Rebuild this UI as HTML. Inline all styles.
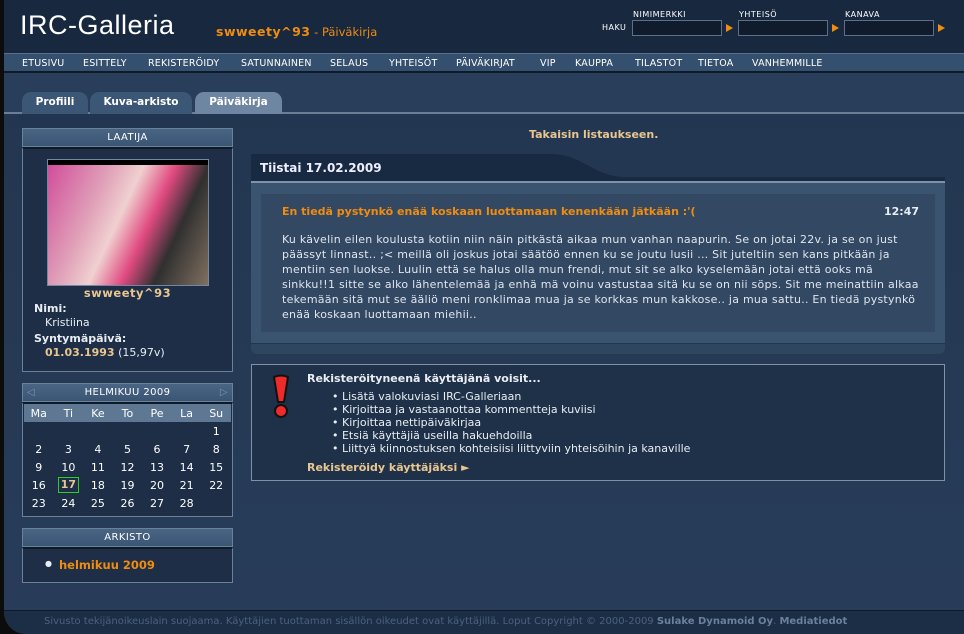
<!DOCTYPE html>
<html><head><meta charset="utf-8">
<style>
*{margin:0;padding:0;box-sizing:border-box}
body{width:964px;height:634px;overflow:hidden;background:#0c0c0c;font-family:"DejaVu Sans","Liberation Sans",sans-serif;font-size:11px;color:#e8edf2;position:relative}
.abs{position:absolute}
#page{position:absolute;left:4px;top:0;width:960px;height:634px;background:linear-gradient(#22354f,#283d5a);overflow:hidden;border-bottom-left-radius:22px}
#hdr{position:absolute;left:0;top:0;width:960px;height:53px;background:#17283f}
.logo{left:16px;top:10px;font-family:"Liberation Sans",sans-serif;font-size:27px;color:#fff;letter-spacing:0.5px}
.sub{left:212px;top:24px;color:#f08c10;font-size:11.5px}
.lbl{font-size:8px;color:#fff;letter-spacing:.5px}
.inp{width:90px;height:16px;background:#101b2b;border:1px solid #5d7089}
.arr{width:0;height:0;border-left:7px solid #f08c10;border-top:4px solid transparent;border-bottom:4px solid transparent}
#nav{position:absolute;left:0;top:53px;width:960px;height:20px;background:#34506e;border-top:1px solid #56708c;border-bottom:2px solid #0f1a28}
#nav span{position:absolute;top:4px;font-size:9.5px;color:#fff;letter-spacing:.2px}
#tabs{position:absolute;left:0;top:73px;width:960px;height:41px;background:#283e5a;border-bottom:2px solid #6a7f96}
.tab{position:absolute;top:19px;height:22px;border-radius:9px 9px 0 0;background:#3c5675;color:#fff;font-weight:bold;font-size:10.5px;text-align:center;line-height:21px}
.box{position:absolute;left:18px;width:211px}
.bh{height:19px;background:linear-gradient(#4a6584,#3b5574);border:1px solid #6a819a;color:#fff;font-size:10px;text-align:center;line-height:17px;letter-spacing:.4px}
.bb{background:#1d2e46;border:1px solid #6a819a;border-top:2px solid #0f1a28}
.cal td{width:29px;text-align:center;height:18px;font-size:11px;color:#fff}
.orange{color:#f08c10}
.tan{color:#e8c690}
</style></head><body>
<div id="page">
<div id="hdr">
 <div class="abs logo">IRC-Galleria</div>
 <div class="abs sub"><b style="font-size:12.5px;letter-spacing:.5px">swweety^93</b> - Päiväkirja</div>
 <div class="abs lbl" style="left:598px;top:23px">HAKU</div>
 <div class="abs lbl" style="left:629px;top:10px">NIMIMERKKI</div>
 <div class="abs lbl" style="left:735px;top:10px">YHTEISÖ</div>
 <div class="abs lbl" style="left:841px;top:10px">KANAVA</div>
 <div class="abs inp" style="left:628px;top:20px"></div><div class="abs arr" style="left:722px;top:24px"></div>
 <div class="abs inp" style="left:734px;top:20px"></div><div class="abs arr" style="left:828px;top:24px"></div>
 <div class="abs inp" style="left:840px;top:20px"></div><div class="abs arr" style="left:934px;top:24px"></div>
</div>
<div id="nav">
<span style="left:18px">ETUSIVU</span><span style="left:79px">ESITTELY</span><span style="left:144px">REKISTERÖIDY</span><span style="left:237px">SATUNNAINEN</span><span style="left:326px">SELAUS</span><span style="left:385px">YHTEISÖT</span><span style="left:452px">PÄIVÄKIRJAT</span><span style="left:536px">VIP</span><span style="left:571px">KAUPPA</span><span style="left:631px">TILASTOT</span><span style="left:694px">TIETOA</span><span style="left:748px">VANHEMMILLE</span>
</div>
<div id="tabs">
 <div class="tab" style="left:18px;width:66px">Profiili</div>
 <div class="tab" style="left:86px;width:102px">Kuva-arkisto</div>
 <div class="tab" style="left:191px;width:87px;background:#6f86a3">Päiväkirja</div>
</div>

<div class="box" style="top:128px">
 <div class="bh">LAATIJA</div>
 <div class="bb" style="height:225px;position:relative">
  <div class="abs" style="left:24px;top:10px;width:162px;height:127px;border:1px solid #7088a4;background:linear-gradient(115deg,#d04a9a 0%,#e0a0b8 30%,#f0d0d0 45%,#e04a80 60%,#303030 75%,#807060 100%)"><div style="height:5px;background:#000"></div></div>
  <div class="abs tan" style="left:0;width:209px;text-align:center;top:137px;font-weight:bold;font-size:11.5px;letter-spacing:.5px">swweety^93</div>
  <div class="abs" style="left:11px;top:153px;font-weight:bold">Nimi:</div>
  <div class="abs" style="left:22px;top:167px">Kristiina</div>
  <div class="abs" style="left:11px;top:183px;font-weight:bold">Syntymäpäivä:</div>
  <div class="abs" style="left:22px;top:197px"><b class="tan">01.03.1993</b> (15,97v)</div>
 </div>
</div>

<div class="box" style="top:383px">
 <div class="bh" style="position:relative"><span class="abs" style="left:4px;top:0;color:#7e93aa">◁</span>HELMIKUU 2009<span class="abs" style="right:4px;top:0;color:#7e93aa">▷</span></div>
 <div class="bb" style="height:115px;padding:0 1px">
  <table class="cal" style="border-collapse:collapse;width:207px">
   <tr style="background:#5e7894"><td>Ma</td><td>Ti</td><td>Ke</td><td>To</td><td>Pe</td><td>La</td><td>Su</td></tr>
   <tr><td></td><td></td><td></td><td></td><td></td><td></td><td>1</td></tr>
   <tr><td>2</td><td>3</td><td>4</td><td>5</td><td>6</td><td>7</td><td>8</td></tr>
   <tr><td>9</td><td>10</td><td>11</td><td>12</td><td>13</td><td>14</td><td>15</td></tr>
   <tr><td>16</td><td><span class="tan" style="display:inline-block;border:1px solid #2cd020;width:21px;height:16px;line-height:14px;font-weight:bold">17</span></td><td>18</td><td>19</td><td>20</td><td>21</td><td>22</td></tr>
   <tr><td>23</td><td>24</td><td>25</td><td>26</td><td>27</td><td>28</td><td></td></tr>
  </table>
 </div>
</div>

<div class="box" style="top:528px">
 <div class="bh">ARKISTO</div>
 <div class="bb" style="height:36px;position:relative">
  <div class="abs" style="left:22px;top:10px;font-size:8px">●</div>
  <div class="abs orange" style="left:36px;top:9px;font-weight:bold;font-size:11.5px">helmikuu 2009</div>
 </div>
</div>

<div class="abs tan" style="left:525px;top:128px;font-weight:bold;font-size:11px">Takaisin listaukseen.</div>
<div class="abs" style="left:247px;top:154px;width:694px;height:200px">
 <svg class="abs" style="left:0;top:0" width="694" height="29">
  <path d="M0 0 H300 C330 0 340 20 370 23 H694 V27 H0 Z" fill="#182a42"/>
  <rect x="0" y="27" width="694" height="2" fill="#7f92a8"/>
 </svg>
 <div class="abs" style="left:9px;top:7px;font-weight:bold;font-size:12px;color:#eef">Tiistai 17.02.2009</div>
 <div class="abs" style="left:0;top:29px;width:694px;height:170px;background:#3a536f;border-radius:0 0 6px 6px"></div>
 <div class="abs" style="left:10px;top:40px;width:674px;height:138px;background:#334862"></div>
 <div class="abs" style="left:0;top:189px;width:694px;height:11px;background:#2f4661;border-top:1px solid #22364f;border-radius:0 0 6px 6px"></div>
 <div class="abs orange" style="left:31px;top:51px;font-weight:bold;font-size:11px">En tiedä pystynkö enää koskaan luottamaan kenenkään jätkään :'(</div>
 <div class="abs" style="left:633px;top:51px;font-weight:bold;font-size:11px">12:47</div>
 <div class="abs" style="left:31px;top:78px;width:640px;line-height:15px;font-size:11px;color:#dfe6ee;letter-spacing:.25px">Ku kävelin eilen koulusta kotiin niin näin pitkästä aikaa mun vanhan naapurin. Se on jotai 22v. ja se on just päässyt linnast.. ;&lt; meillä oli joskus jotai säätöö ennen ku se joutu lusii ... Sit juteltiin sen kans pitkään ja mentiin sen luokse. Luulin että se halus olla mun frendi, mut sit se alko kyselemään jotai että ooks mä sinkku!!1 sitte se alko lähentelemää ja enhä mä voinu vastustaa sitä ku se on nii söps. Sit me meinattiin alkaa tekemään sitä mut se ääliö meni ronklimaa mua ja se korkkas mun kakkose.. ja mua sattu.. En tiedä pystynkö enää koskaan luottamaan miehii..</div>
</div>

<div class="abs" style="left:247px;top:364px;width:694px;height:117px;background:#1f3149;border:1px solid #7f92a8">
 <svg class="abs" style="left:19px;top:9px" width="20" height="46">
  <path d="M3 3 Q10 0 17 3 L13 28 H7 Z" fill="#ee2a2a" stroke="#111" stroke-width="2" stroke-linejoin="round"/>
  <ellipse cx="10" cy="37" rx="6" ry="6" fill="#ee2a2a" stroke="#111" stroke-width="2"/>
 </svg>
 <div class="abs" style="left:55px;top:7px;font-weight:bold">Rekisteröityneenä käyttäjänä voisit...</div>
 <div class="abs" style="left:80px;top:25px;line-height:13px">
  • Lisätä valokuviasi IRC-Galleriaan<br>• Kirjoittaa ja vastaanottaa kommentteja kuviisi<br>• Kirjoittaa nettipäiväkirjaa<br>• Etsiä käyttäjiä useilla hakuehdoilla<br>• Liittyä kiinnostuksen kohteisiisi liittyviin yhteisöihin ja kanaville
 </div>
 <div class="abs tan" style="left:55px;top:96px;font-weight:bold">Rekisteröidy käyttäjäksi ►</div>
</div>

<div class="abs" style="left:0;top:610px;width:960px;height:24px;background:#1c2e46;border-top:1px solid #0f1a28"></div>
<div class="abs" style="left:40px;top:616px;font-size:10px;color:#4b6180;white-space:nowrap">Sivusto tekijänoikeuslain suojaama. Käyttäjien tuottaman sisällön oikeudet ovat käyttäjillä. Loput Copyright © 2000-2009 <b style="color:#6b809c">Sulake Dynamoid Oy</b>. <b style="color:#6b809c">Mediatiedot</b></div>
</div>
</body></html>
